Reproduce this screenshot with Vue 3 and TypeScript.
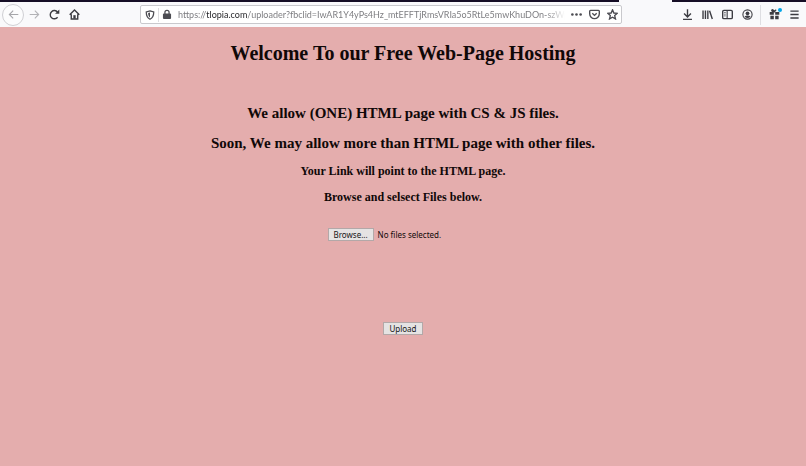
<script setup lang="ts">
import { computed, ref } from 'vue'

const address = ref('https://tlopia.com/uploader?fbclid=IwAR1Y4yPs4Hz_mtEFFTjRmsVRIa5o5RtLe5mwKhuDOn-szWpE7')
const picker = ref<HTMLInputElement | null>(null)
const files = ref<string[]>([])

const fileStatus = computed(() => {
  if (files.value.length === 0) return 'No files selected.'
  return files.value.length === 1 ? files.value[0] : `${files.value.length} files selected.`
})

function browse(): void {
  picker.value?.click()
}

function onPick(event: Event): void {
  const input = event.target as HTMLInputElement
  files.value = Array.from(input.files ?? []).map((file) => file.name)
}
</script>

<template>
  <div class="window">
    <div class="tabs"><span class="tab"></span></div>
    <header class="toolbar">
      <nav class="group nav">
        <button type="button" class="tool back" aria-label="Back" disabled>
          <svg viewBox="0 0 16 16"><path d="M15 8H2M7.500 2.500 2 8l5.500 5.500" /></svg>
        </button>
        <button type="button" class="tool faded" aria-label="Forward" disabled>
          <svg viewBox="0 0 16 16"><path d="M1 8h13M8.500 2.500 14 8l-5.500 5.500" /></svg>
        </button>
        <button type="button" class="tool" aria-label="Reload">
          <svg viewBox="0 0 16 16"><path class="bold" d="M12.500 12A6 6 0 1 1 12.500 4.500" /><path class="solid" d="M15 .8V7H8.800z" /></svg>
        </button>
        <button type="button" class="tool" aria-label="Home">
          <svg viewBox="0 0 16 16"><path class="bold" d="M1 8.500 8 1.500l7 7M3.300 7.500V14.500h9.400V7.500" /><path class="solid" d="M6.300 9h3.400v5H6.300z" /></svg>
        </button>
      </nav>

      <div class="urlbar">
        <svg class="icon" viewBox="0 0 16 16"><path class="bold" d="M8 1.300 14 3c0 5-.8 9-6 11.800C2.800 12 2 8 2 3z" /><path class="solid" d="M8 4v8C5.700 10.300 5 8 5 4.800z" /></svg>
        <span class="rule"></span>
        <svg class="icon lock" viewBox="0 0 16 16"><path class="bold" d="M4.700 7V4.500a3.300 3.300 0 0 1 6.600 0V7" /><rect class="solid" x="1.500" y="6.500" width="13" height="8.500" rx="1.500" /></svg>
        <input v-model="address" class="address" type="text" aria-label="Address" spellcheck="false" />
        <button type="button" class="page-tool" aria-label="Page actions">
          <svg viewBox="0 0 16 16"><circle class="solid" cx="2" cy="8" r="1.900" /><circle class="solid" cx="8" cy="8" r="1.900" /><circle class="solid" cx="14" cy="8" r="1.900" /></svg>
        </button>
        <button type="button" class="page-tool" aria-label="Save to Pocket">
          <svg viewBox="0 0 16 16"><path class="bold" d="M2.200 2h11.600q1.200 0 1.200 1.200V7a7 7 0 0 1-14 0V3.200Q1 2 2.200 2z" /><path class="bold" d="M4.800 6.200 8 9.300l3.200-3.100" /></svg>
        </button>
        <button type="button" class="page-tool" aria-label="Bookmark this page">
          <svg viewBox="0 0 16 16"><path class="bold" d="m8 1.300 2 4.500 4.900.5-3.700 3.200 1.100 4.900L8 11.900l-4.300 2.500 1.100-4.900L1.100 6.300 6 5.800z" /></svg>
        </button>
      </div>

      <div class="group extras">
        <button type="button" class="tool" aria-label="Downloads">
          <svg viewBox="0 0 16 16"><path class="bold" d="M8 .5V11M3 6.500l5 5 5-5M1.500 15h13" /></svg>
        </button>
        <button type="button" class="tool" aria-label="Library">
          <svg viewBox="0 0 16 16"><path class="bold" d="M1.500 2v12.500M5 2v12.500M8.500 2v12.500M11 2.500l4 12" /></svg>
        </button>
        <button type="button" class="tool" aria-label="Sidebars">
          <svg viewBox="0 0 16 16"><rect class="bold" x="1" y="2" width="14" height="12" rx="1.800" /><path d="M7.500 2v12" /><path class="thin" d="M3 5h2.500M3 7.500h2.500M3 10h2.500" /></svg>
        </button>
        <button type="button" class="tool" aria-label="Account">
          <svg viewBox="0 0 16 16"><circle cx="8" cy="8" r="6.700" /><circle class="solid" cx="8" cy="6.300" r="2.700" /><path class="solid" d="M3.500 11q4.500-3 9 0Q8 15.500 3.500 11z" /></svg>
        </button>
        <span class="divider"></span>
        <button type="button" class="tool gift" aria-label="What's new">
          <svg viewBox="0 0 16 16"><path class="solid" d="M1 4.500h6v4H1zM9 4.500h6v4H9zM2 9.800h5V15H2zM9 9.800h5V15H9z" /><path class="bold" d="M8 4.500C3 4.500 3.500.5 5.500 1.300S8 4.500 8 4.500 8.500 2 10.500 1.300" /></svg>
          <span class="badge"></span>
        </button>
        <button type="button" class="tool" aria-label="Menu">
          <svg viewBox="0 0 16 16"><path class="bold" d="M2 3h12M2 8h12M2 13h12" /></svg>
        </button>
      </div>
    </header>

    <main class="page">
      <h1>Welcome To our Free Web-Page Hosting</h1>
      <h2>We allow (ONE) HTML page with CS &amp; JS files.</h2>
      <h2>Soon, We may allow more than HTML page with other files.</h2>
      <h3>Your Link will point to the HTML page.</h3>
      <h3>Browse and selsect Files below.</h3>
      <form class="upload" @submit.prevent>
        <div class="picker">
          <input ref="picker" type="file" multiple hidden aria-label="Files" @change="onPick" />
          <button type="button" class="control" @click="browse">Browse...</button>
          <span class="status">{{ fileStatus }}</span>
        </div>
        <button type="submit" class="control">Upload</button>
      </form>
    </main>
  </div>
</template>

<style>
body {
  background: #e4adad;
}
</style>

<style scoped>
.window {
  min-height: 100vh;
  background: #e4adad;
}

.tabs {
  display: flex;
  justify-content: flex-end;
  height: 2px;
  padding-right: 134px;
  background: #160e26;
}

.tab {
  width: 53px;
  background: #f9f9fb;
}

.toolbar {
  display: flex;
  align-items: center;
  height: 25px;
  padding: 0 2px;
  background: #f9f9fb;
}

button {
  font: inherit;
}

.group {
  display: flex;
  align-items: center;
}

.tool {
  position: relative;
  display: grid;
  place-items: center;
  width: 20px;
  height: 20px;
  padding: 0;
  border: 0;
  background: none;
  color: #3c3c42;
}

.back {
  width: 22px;
  height: 22px;
  border: 1px solid #d0d0d4;
  border-radius: 50%;
  background: #fcfcfd;
  color: #a6a6aa;
}

.faded {
  color: #b2b2b6;
}

svg {
  display: block;
  width: 11px;
  height: 11px;
  fill: none;
  stroke: currentColor;
  stroke-width: 1.6;
}

.bold {
  stroke-width: 2;
}

.thin {
  stroke-width: 1;
}

.solid {
  fill: currentColor;
  stroke: none;
}

.urlbar {
  display: flex;
  flex: 1;
  align-items: center;
  min-width: 0;
  height: 19px;
  box-sizing: border-box;
  margin: 0 55px 0 56px;
  padding: 0 0 0 4px;
  border: 1px solid #c9c9cd;
  border-radius: 2px;
  background: #fff;
  color: #4c4c52;
}

.icon {
  width: 10px;
  height: 10px;
  flex: none;
}

.rule {
  width: 1px;
  height: 14px;
  margin: 0 3px;
  background: #dddde0;
}

.lock {
  height: 11px;
}

.address {
  flex: 1;
  min-width: 0;
  height: 17px;
  margin: 0 2px 0 6px;
  padding: 0;
  border: 0;
  outline: 0;
  background: linear-gradient(to right, #77777b 28px, #202024 28px, #202024 69px, #77777b 69px, #77777b calc(100% - 20px), transparent);
  background-clip: text;
  -webkit-background-clip: text;
  color: transparent;
  font: 9px/17px Lato, "Open Sans", sans-serif;
}

.page-tool {
  display: grid;
  place-items: center;
  width: 18px;
  height: 17px;
  padding: 0;
  border: 0;
  background: none;
  color: inherit;
}

.divider {
  width: 1px;
  height: 20px;
  margin: 0 3px;
  background: #dedee2;
}

.badge {
  position: absolute;
  top: 3px;
  right: 2px;
  width: 4px;
  height: 4px;
  border-radius: 50%;
  background: #00a5e8;
}

.page {
  padding-top: 14px;
  color: #100808;
  font-family: "Liberation Serif", "Times New Roman", serif;
  text-align: center;
}

h1,
h2,
h3 {
  margin: 0;
  font-weight: bold;
}

h1 {
  margin-bottom: 39px;
  font-size: 20px;
  line-height: 24px;
}

h2 {
  margin-bottom: 12px;
  font-size: 15px;
  line-height: 18px;
}

h3 {
  margin-bottom: 12px;
  font-size: 12px;
  line-height: 14px;
}

.upload {
  display: flex;
  flex-direction: column;
  align-items: center;
  gap: 81px;
  padding-top: 12px;
  font: 8px/11px "Noto Sans", "Open Sans", sans-serif;
}

.picker {
  display: flex;
  align-items: center;
  gap: 4px;
  width: 151px;
}

.control {
  height: 13px;
  padding: 0 5px;
  border: 1px solid #b3a8a8;
  background: #e5e3e3;
  color: #161616;
}

.status {
  white-space: nowrap;
}
</style>
